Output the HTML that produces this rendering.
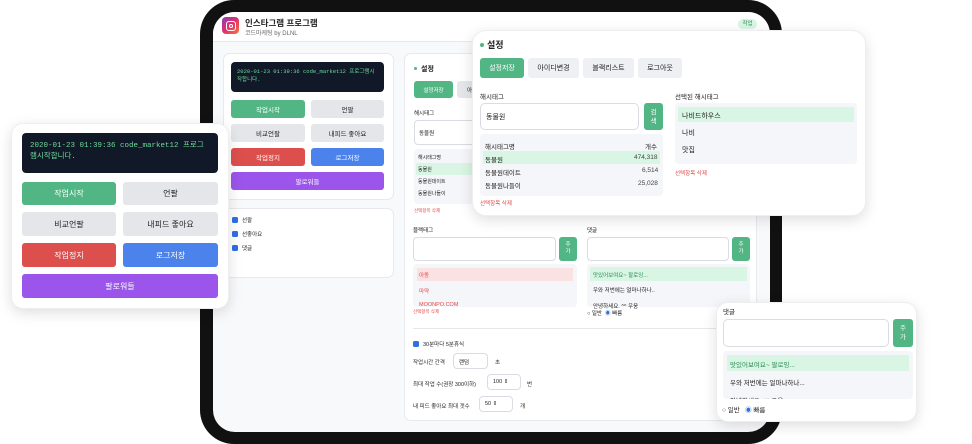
<!DOCTYPE html>
<html><head><meta charset="utf-8"><style>
*{box-sizing:border-box;margin:0;padding:0}
body{width:972px;height:444px;background:#fff;position:relative;overflow:hidden;font-family:"Liberation Sans","Noto Sans CJK KR",sans-serif;color:#222}
.a{position:absolute}
.frame{left:200px;top:0;width:582px;height:444px;background:#111;border-radius:34px}
.screen{left:213px;top:12px;width:557px;height:420px;background:#f8f9fb;border-radius:22px;overflow:hidden}
.card{background:#fff;border:1px solid #e7e9ee;border-radius:7px}
.btn{position:absolute;border-radius:3px;display:flex;align-items:center;justify-content:center;font-size:6.5px;color:#222}
.g{background:#52b584;color:#fff}.gr{background:#e4e6ea}.r{background:#dc4f4c;color:#fff}.b{background:#4b82ec;color:#fff}.p{background:#9b55ea;color:#fff}
.term{background:#111827;color:#6ddc9a;font-family:"Liberation Mono","Noto Sans CJK KR",monospace;border-radius:4px}
.t{position:absolute;white-space:nowrap}
.inp{position:absolute;background:#fff;border:1px solid #d9dce2;border-radius:4px}
.list{position:absolute;background:#f5f6f9;border-radius:4px;overflow:hidden}
.pop{position:absolute;background:#fff;border-radius:14px;box-shadow:0 4px 14px rgba(0,0,0,.13);border:1px solid #eee}
.red{color:#e04848}
.cb{position:absolute;width:6px;height:6px;background:#2f6fe4;border-radius:1.5px}
</style></head><body>
<div class="a frame"></div>
<div class="a screen">
  <div class="a" style="left:0;top:0;width:557px;height:30px;background:#fff;border-bottom:1px solid #e5e7eb"></div>
  <div class="a" style="left:9px;top:5px;width:17px;height:17px;border-radius:4px;background:linear-gradient(135deg,#8a3ab9,#e1306c 50%,#f77737)"></div>
  <div class="a" style="left:12.5px;top:8.5px;width:10px;height:10px;border:1.4px solid #fff;border-radius:3px"></div>
  <div class="a" style="left:15.5px;top:11.5px;width:4px;height:4px;border:1.2px solid #fff;border-radius:50%"></div>
  <div class="t" style="left:32px;top:5px;font-size:8.5px;font-weight:bold">인스타그램 프로그램</div>
  <div class="t" style="left:32px;top:16px;font-size:6px;color:#666">코드마케팅 by DLNL</div>
  <div class="a" style="left:525px;top:7px;width:19px;height:10px;border-radius:5px;background:#d8f5e3;color:#2a8a55;font-size:5.5px;text-align:center;line-height:10px">작업</div>

  <div class="a card" style="left:10px;top:41px;width:171px;height:147px"></div>
  <div class="a term" style="left:18px;top:50px;width:153px;height:30px;font-size:5.5px;padding:6px 6px;line-height:8px">2020-01-23 01:39:36 code_market12 프로그램시작합니다.</div>
  <div class="btn g" style="left:18px;top:88px;width:74px;height:18px">작업시작</div>
  <div class="btn gr" style="left:98px;top:88px;width:73px;height:18px">언팔</div>
  <div class="btn gr" style="left:18px;top:112px;width:74px;height:18px">비교언팔</div>
  <div class="btn gr" style="left:98px;top:112px;width:73px;height:18px">내피드 좋아요</div>
  <div class="btn r" style="left:18px;top:136px;width:74px;height:18px">작업정지</div>
  <div class="btn b" style="left:98px;top:136px;width:73px;height:18px">로그저장</div>
  <div class="btn p" style="left:18px;top:160px;width:153px;height:18px">팔로워들</div>
  <div class="a card" style="left:10px;top:196px;width:171px;height:70px"></div>
  <div class="cb" style="left:19px;top:205px"></div><div class="t" style="left:29px;top:204px;font-size:5.5px">선팔</div>
  <div class="cb" style="left:19px;top:219px"></div><div class="t" style="left:29px;top:218px;font-size:5.5px">선좋아요</div>
  <div class="cb" style="left:19px;top:233px"></div><div class="t" style="left:29px;top:232px;font-size:5.5px">댓글</div>

  <div class="a card" style="left:191px;top:41px;width:353px;height:368px"></div>
  <div class="a" style="left:201px;top:55px;width:3px;height:3px;border-radius:50%;background:#52b584"></div>
  <div class="t" style="left:208px;top:52px;font-size:7px;font-weight:bold">설정</div>
  <div class="btn g" style="left:201px;top:69px;width:39px;height:17px;font-size:5.5px">설정저장</div>
  <div class="btn gr" style="left:244px;top:69px;width:30px;height:17px;font-size:5.5px">아이</div>
  <div class="t" style="left:201px;top:97px;font-size:5.5px">해시태그</div>
  <div class="inp" style="left:201px;top:108px;width:70px;height:25px"></div>
  <div class="t" style="left:206px;top:117px;font-size:5.5px">동물원</div>
  <div class="list" style="left:201px;top:137px;width:70px;height:55px"></div>
  <div class="a" style="left:203px;top:151px;width:68px;height:12px;background:#d9f6e4"></div>
  <div class="t" style="left:205px;top:142px;font-size:5px">해시태그명</div>
  <div class="t" style="left:205px;top:154px;font-size:5px">동물원</div>
  <div class="t" style="left:205px;top:166px;font-size:5px">동물원데이트</div>
  <div class="t" style="left:205px;top:178px;font-size:5px">동물원나들이</div>
  <div class="t red" style="left:201px;top:196px;font-size:4.5px">선택항목 삭제</div>
  <div class="t" style="left:200px;top:214px;font-size:5.5px">블랙태그</div>
  <div class="inp" style="left:200px;top:225px;width:143px;height:24px"></div>
  <div class="btn g" style="left:346px;top:225px;width:18px;height:24px;font-size:5.5px;line-height:7px;text-align:center">주<br>가</div>
  <div class="list" style="left:200px;top:252px;width:164px;height:43px"></div>
  <div class="a" style="left:204px;top:256px;width:156px;height:13px;background:#fbe2e2"></div>
  <div class="t red" style="left:206px;top:259px;font-size:5.5px">아동</div>
  <div class="t red" style="left:206px;top:275px;font-size:5.5px">마약</div>
  <div class="t red" style="left:206px;top:290px;font-size:5.5px">MOONPO.COM</div>
  <div class="t red" style="left:200px;top:297px;font-size:4.5px">선택항목 삭제</div>
  <div class="t" style="left:374px;top:214px;font-size:5.5px">댓글</div>
  <div class="inp" style="left:374px;top:225px;width:142px;height:24px"></div>
  <div class="btn g" style="left:519px;top:225px;width:18px;height:24px;font-size:5.5px;line-height:7px;text-align:center">주<br>가</div>
  <div class="list" style="left:374px;top:252px;width:163px;height:43px"></div>
  <div class="a" style="left:377px;top:255px;width:157px;height:14px;background:#d9f6e4"></div>
  <div class="t" style="left:380px;top:259px;font-size:5.5px;color:#2a8a55">맛있어보여요~ 팔로잉...</div>
  <div class="t" style="left:380px;top:274px;font-size:5.5px">우와 저번에는 얼마나하나..</div>
  <div class="t" style="left:380px;top:290px;font-size:5.5px">안녕하세요. ^^ 우웅</div>
  <div class="t" style="left:374px;top:297px;font-size:5.5px">○ 일반 &nbsp;<span style="color:#2f6fe4">◉</span> 빠름</div>
  <div class="a" style="left:200px;top:316px;width:344px;height:1px;background:#e5e7eb"></div>
  <div class="cb" style="left:200px;top:329px;width:6px;height:6px"></div>
  <div class="t" style="left:210px;top:328px;font-size:5.5px">30분마다 5분휴식</div>
  <div class="t" style="left:200px;top:346px;font-size:5.5px">작업시간 간격</div>
  <div class="inp" style="left:240px;top:341px;width:35px;height:16px;font-size:5.5px;padding:4px 5px">랜덤</div>
  <div class="t" style="left:282px;top:346px;font-size:5.5px">초</div>
  <div class="t" style="left:200px;top:368px;font-size:5.5px">최대 작업 수(권장 300이하)</div>
  <div class="inp" style="left:274px;top:362px;width:34px;height:16px;font-size:5.5px;padding:4px 5px">100 ⇕</div>
  <div class="t" style="left:314px;top:368px;font-size:5.5px">번</div>
  <div class="t" style="left:200px;top:390px;font-size:5.5px">내 피드 좋아요 최대 갯수</div>
  <div class="inp" style="left:266px;top:384px;width:34px;height:16px;font-size:5.5px;padding:4px 5px">50 ⇕</div>
  <div class="t" style="left:307px;top:390px;font-size:5.5px">개</div>
</div>

<!-- settings popup -->
<div class="pop" style="left:472px;top:30px;width:394px;height:186px"></div>
<div class="a" style="left:480px;top:43px;width:4px;height:4px;border-radius:50%;background:#52b584"></div>
<div class="t" style="left:487px;top:38px;font-size:9px;font-weight:bold">설정</div>
<div class="btn g" style="left:480px;top:58px;width:44px;height:20px;font-size:7px">설정저장</div>
<div class="btn gr" style="left:528px;top:58px;width:51px;height:20px;font-size:7px;background:#eff0f3">아이디변경</div>
<div class="btn gr" style="left:583px;top:58px;width:51px;height:20px;font-size:7px;background:#eff0f3">블랙리스트</div>
<div class="btn gr" style="left:638px;top:58px;width:44px;height:20px;font-size:7px;background:#eff0f3">로그아웃</div>
<div class="t" style="left:480px;top:91px;font-size:6.5px">해시태그</div>
<div class="inp" style="left:480px;top:103px;width:159px;height:27px;border-radius:5px"></div>
<div class="t" style="left:486px;top:112px;font-size:7px">동물원</div>
<div class="btn g" style="left:644px;top:103px;width:19px;height:27px;font-size:6.5px;line-height:9px;text-align:center">검<br>색</div>
<div class="list" style="left:480px;top:134px;width:183px;height:62px"></div>
<div class="t" style="left:485px;top:141px;font-size:6.5px">해시태그명</div><div class="t" style="left:645px;top:141px;font-size:6.5px">개수</div>
<div class="a" style="left:483px;top:151px;width:177px;height:13px;background:#d9f6e4"></div>
<div class="t" style="left:485px;top:154px;font-size:6.5px">동물원</div><div class="t" style="left:634px;top:154px;font-size:6.5px;color:#444">474,318</div>
<div class="t" style="left:485px;top:167px;font-size:6.5px">동물원데이트</div><div class="t" style="left:642px;top:167px;font-size:6.5px;color:#444">6,514</div>
<div class="t" style="left:485px;top:180px;font-size:6.5px">동물원나들이</div><div class="t" style="left:638px;top:180px;font-size:6.5px;color:#444">25,028</div>
<div class="t red" style="left:480px;top:199px;font-size:5.5px">선택항목 삭제</div>
<div class="t" style="left:675px;top:91px;font-size:6.5px">선택된 해시태그</div>
<div class="list" style="left:675px;top:103px;width:182px;height:61px"></div>
<div class="a" style="left:678px;top:107px;width:176px;height:15px;background:#d9f6e4"></div>
<div class="t" style="left:682px;top:111px;font-size:7px">나비드하우스</div>
<div class="t" style="left:682px;top:128px;font-size:7px">나비</div>
<div class="t" style="left:682px;top:145px;font-size:7px">맛집</div>
<div class="t red" style="left:675px;top:169px;font-size:5.5px">선택항목 삭제</div>

<!-- left popup -->
<div class="pop" style="left:11px;top:123px;width:218px;height:186px;border-radius:12px"></div>
<div class="a term" style="left:22px;top:133px;width:196px;height:40px;font-size:7.5px;padding:8px 8px;line-height:11px">2020-01-23 01:39:36 code_market12 프로그램시작합니다.</div>
<div class="btn g" style="left:22px;top:182px;width:94px;height:23px;font-size:8px">작업시작</div>
<div class="btn gr" style="left:123px;top:182px;width:95px;height:23px;font-size:8px">언팔</div>
<div class="btn gr" style="left:22px;top:212px;width:94px;height:24px;font-size:8px">비교언팔</div>
<div class="btn gr" style="left:123px;top:212px;width:95px;height:24px;font-size:8px">내피드 좋아요</div>
<div class="btn r" style="left:22px;top:243px;width:94px;height:24px;font-size:8px">작업정지</div>
<div class="btn b" style="left:123px;top:243px;width:95px;height:24px;font-size:8px">로그저장</div>
<div class="btn p" style="left:22px;top:274px;width:196px;height:24px;font-size:8px">팔로워들</div>

<!-- comments popup -->
<div class="pop" style="left:716px;top:302px;width:201px;height:120px;border-radius:12px"></div>
<div class="t" style="left:723px;top:306px;font-size:6.5px">댓글</div>
<div class="inp" style="left:723px;top:319px;width:166px;height:28px;border-radius:5px"></div>
<div class="btn g" style="left:893px;top:319px;width:20px;height:28px;font-size:6.5px;line-height:9px;text-align:center">주<br>가</div>
<div class="list" style="left:723px;top:351px;width:190px;height:48px"></div>
<div class="a" style="left:727px;top:355px;width:182px;height:16px;background:#d9f6e4"></div>
<div class="t" style="left:730px;top:359px;font-size:6.5px;color:#2a8a55">맛있어보여요~ 팔로잉...</div>
<div class="t" style="left:730px;top:377px;font-size:6.5px">우와 저번에는 얼마나하나...</div>
<div class="t" style="left:730px;top:395px;font-size:6.5px;height:4px;overflow:hidden">안녕하세요. ^^ 우웅</div>
<div class="t" style="left:722px;top:404px;font-size:6.5px">○ 일반 &nbsp;&nbsp;<span style="color:#2f6fe4">◉</span> 빠름</div>
</body></html>
